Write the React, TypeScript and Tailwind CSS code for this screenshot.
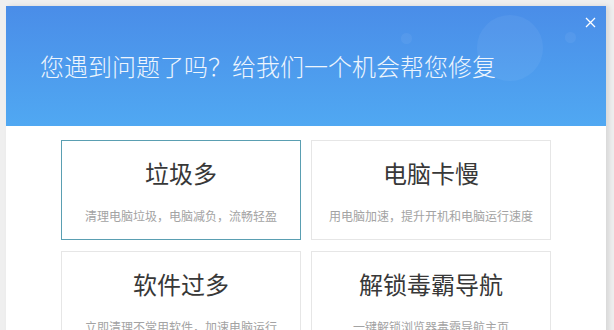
import { memo } from 'react';
import cls from 'clsx';

type Item = { title: string; desc: string; active?: boolean };

const items: Item[] = [
  { title: '垃圾多', desc: '清理电脑垃圾，电脑减负，流畅轻盈', active: true },
  { title: '电脑卡慢', desc: '用电脑加速，提升开机和电脑运行速度' },
  { title: '软件过多', desc: '立即清理不常用软件，加速电脑运行' },
  { title: '解锁毒霸导航', desc: '一键解锁浏览器毒霸导航主页' },
];

const font = { fontFamily: '"Microsoft YaHei", "Noto Sans CJK SC", "Noto Sans", sans-serif' };

const Card = memo(({ item }: { item: Item }) => (
  <div
    className={cls(
      'w-[240px] h-[100px] flex flex-col items-center pt-[16px] bg-white border cursor-pointer',
      item.active ? 'border-[#5a9fb2]' : 'border-[#e6e6e6]',
    )}
  >
    <div className="text-[24px] leading-[32px] text-[#383838]">{item.title}</div>
    <div className="mt-[19px] text-[12px] leading-[16px] text-[#a3a3a3]">{item.desc}</div>
  </div>
));
Card.displayName = 'Card';

export default function App() {
  return (
    <div className="w-[614px] h-[330px] overflow-hidden bg-[#efefef] pl-[6px] pt-[6px]" style={font}>
      <div className="w-[600px] h-[330px] bg-white shadow-[3px_0_5px_rgba(0,0,0,0.1)]">
        <div className="relative h-[120px] overflow-hidden bg-gradient-to-b from-[#4a8de8] to-[#50a8f2] flex items-center pl-[34px]">
          <div className="absolute left-[471px] top-[9px] w-[66px] h-[66px] rounded-full bg-white/[0.05]" />
          <div className="absolute left-[395px] top-[27px] w-[11px] h-[11px] rounded-full bg-white/[0.05]" />
          <div className="absolute left-[559px] top-[26px] w-[11px] h-[11px] rounded-full bg-white/[0.05]" />
          <div className="relative text-[24px] leading-[32px] font-light text-[#eef5fd]">
            您遇到问题了吗？给我们一个机会帮您修复
          </div>
          <svg
            className="absolute left-[579px] top-[11px]"
            width="11"
            height="11"
            viewBox="0 0 11 11"
            fill="none"
            stroke="white"
            strokeWidth="1.3"
          >
            <path d="M1 1L10 10M10 1L1 10" />
          </svg>
        </div>
        <div className="grid grid-cols-[240px_240px] gap-x-[10px] gap-y-[11px] pl-[55px] pt-[14px]">
          {items.map((item) => (
            <Card key={item.title} item={item} />
          ))}
        </div>
      </div>
    </div>
  );
}
